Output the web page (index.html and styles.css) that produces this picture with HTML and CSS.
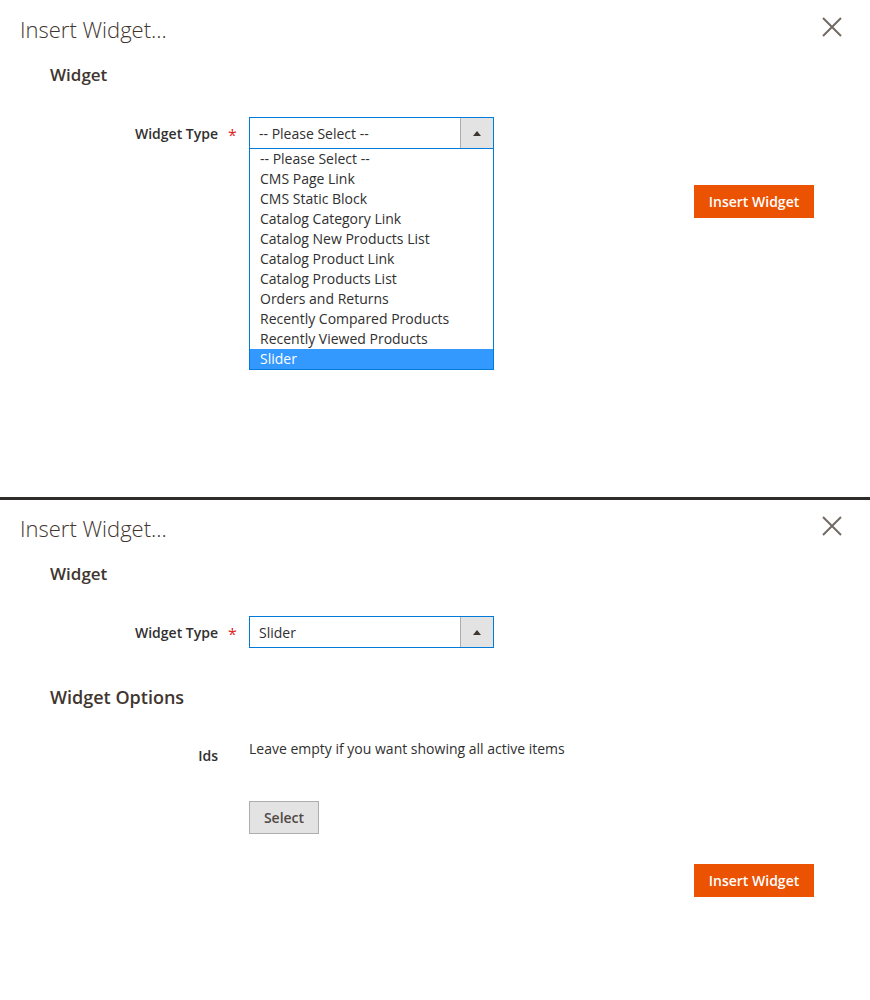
FILE: index.html
```html
<!DOCTYPE html>
<html>
<head>
<meta charset="utf-8">
<link rel="stylesheet" href="styles.css">
</head>
<body>
<section class="panel panel-top">
  <header class="modal-header">
    <h1 class="modal-title">Insert Widget...</h1>
    <button class="close" aria-label="Close">
      <svg width="20" height="20" viewBox="0 0 20 20"><path d="M1 1 L19 19 M19 1 L1 19" stroke="#736963" stroke-width="2" fill="none"/></svg>
    </button>
  </header>
  <div class="fieldset">
    <h2 class="legend">Widget</h2>
    <div class="field">
      <label class="label">Widget Type</label>
      <span class="req">*</span>
      <div class="control">
        <div class="select open">
          <span class="select-value">-- Please Select --</span>
          <span class="select-arrow"><svg width="8" height="5" viewBox="0 0 8 5"><path d="M0 5 L4 0 L8 5 Z" fill="#41362f"/></svg></span>
        </div>
        <ul class="options">
          <li>-- Please Select --</li>
          <li>CMS Page Link</li>
          <li>CMS Static Block</li>
          <li>Catalog Category Link</li>
          <li>Catalog New Products List</li>
          <li>Catalog Product Link</li>
          <li>Catalog Products List</li>
          <li>Orders and Returns</li>
          <li>Recently Compared Products</li>
          <li>Recently Viewed Products</li>
          <li class="selected">Slider</li>
        </ul>
      </div>
    </div>
  </div>
  <div class="actions actions-top">
    <button class="primary">Insert Widget</button>
  </div>
</section>
<section class="panel panel-bottom">
  <header class="modal-header">
    <h1 class="modal-title">Insert Widget...</h1>
    <button class="close" aria-label="Close">
      <svg width="20" height="20" viewBox="0 0 20 20"><path d="M1 1 L19 19 M19 1 L1 19" stroke="#736963" stroke-width="2" fill="none"/></svg>
    </button>
  </header>
  <div class="fieldset">
    <h2 class="legend">Widget</h2>
    <div class="field">
      <label class="label">Widget Type</label>
      <span class="req">*</span>
      <div class="control">
        <div class="select">
          <span class="select-value">Slider</span>
          <span class="select-arrow"><svg width="8" height="5" viewBox="0 0 8 5"><path d="M0 5 L4 0 L8 5 Z" fill="#41362f"/></svg></span>
        </div>
      </div>
    </div>
  </div>
  <div class="fieldset options-set">
    <h2 class="legend legend-lg">Widget Options</h2>
    <div class="field field-ids">
      <label class="label label-ids">Ids</label>
      <span class="req-empty"></span>
      <div class="control">
        <p class="note">Leave empty if you want showing all active items</p>
        <button class="secondary">Select</button>
      </div>
    </div>
  </div>
  <div class="actions actions-bottom">
    <button class="primary">Insert Widget</button>
  </div>
</section>
</body>
</html>
```
FILE: styles.css
```css
* { box-sizing: border-box; }
html, body { margin: 0; padding: 0; background: #fff; }
body {
  font-family: "Open Sans", "Liberation Sans", sans-serif;
  color: #303030;
  width: 870px;
}
.panel { position: relative; }
.panel-top { height: 500px; border-bottom: 3px solid #2e2c29; }
.panel-bottom { height: 500px; }
.modal-header {
  display: flex;
  justify-content: space-between;
  align-items: flex-start;
  padding: 13px 28px 0 20px;
}
.panel-bottom .modal-header { padding-top: 12px; }
.modal-title {
  margin: 0;
  font-size: 22px;
  font-weight: 300;
  line-height: 32px;
  color: #41362f;
}
.close {
  border: 0; background: none; padding: 0; margin-top: 4px;
  width: 20px; height: 20px; display: block; cursor: pointer;
}
.close svg { display: block; }
.fieldset { padding-left: 50px; }
.legend {
  margin: 18px 0 0 0;
  font-size: 17px;
  font-weight: 600;
  line-height: 24px;
  color: #41362f;
}
.field {
  display: grid;
  grid-template-columns: 168px 31px 1fr;
  margin-top: 30px;
  align-items: start;
}
.label {
  text-align: right;
  font-size: 14px;
  font-weight: 600;
  color: #303030;
  line-height: 20px;
  padding-top: 7px;
}
.req {
  color: #e22626;
  font-size: 16px;
  line-height: 20px;
  padding-top: 8px;
  padding-left: 10px;
}
.control { position: relative; }
.select {
  display: flex;
  width: 245px;
  height: 32px;
  border: 1px solid #007bdb;
  background: #fff;
}
.select-value {
  flex: 1;
  font-size: 14px;
  line-height: 31px;
  padding-left: 9px;
  color: #303030;
}
.select-arrow {
  width: 33px;
  background: #e3e3e3;
  border-left: 1px solid #adadad;
  display: flex;
  align-items: center;
  justify-content: center;
}
.select-arrow svg { display: block; margin-top: 0; }
.options {
  position: absolute;
  top: 32px;
  left: 0;
  width: 245px;
  margin: 0;
  padding: 0;
  list-style: none;
  background: #fff;
  border: 1px solid #007bdb;
  border-top: 0;
}
.options li {
  font-size: 14px;
  line-height: 20px;
  height: 20px;
  padding-left: 10px;
  color: #303030;
}
.options li.selected { background: #3399ff; color: #fff; }
.actions {
  display: flex;
  justify-content: flex-end;
  padding-right: 56px;
}
.actions-top { margin-top: 36px; }
.actions-bottom { margin-top: 30px; }
.primary {
  background: #eb5202;
  border: 1px solid #eb5202;
  color: #fff;
  font-family: inherit;
  font-size: 14px;
  font-weight: 600;
  height: 33px;
  width: 120px;
  padding: 0;
  line-height: 31px;
}
.options-set .legend-lg {
  margin-top: 36px;
  font-size: 18px;
  line-height: 26px;
}
.field-ids { margin-top: 29px; }
.label-ids { padding-top: 7px; }
.note {
  margin: 0;
  font-size: 14px;
  line-height: 20px;
  color: #303030;
  white-space: nowrap;
}
.secondary {
  margin-top: 42px;
  width: 70px;
  height: 33px;
  background: #e3e3e3;
  border: 1px solid #adadad;
  color: #514943;
  font-family: inherit;
  font-size: 14px;
  font-weight: 600;
  padding: 0;
}
```
